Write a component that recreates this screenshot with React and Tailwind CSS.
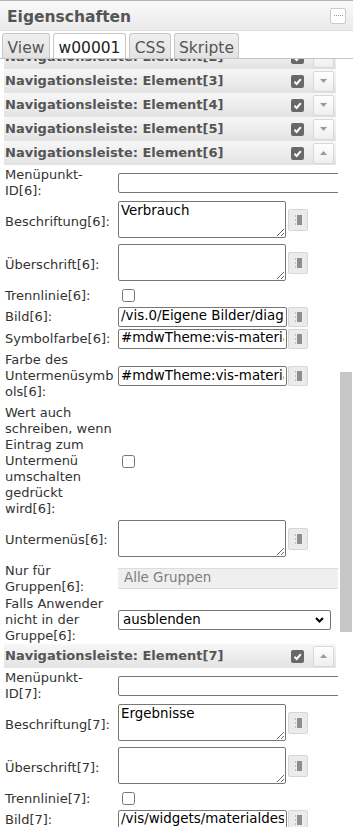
import React from "react";

const Btn = ({ h = "h-[20px]" }) => (
  <span
    className={`ml-[1px] flex w-[20px] ${h} shrink-0 items-center justify-center rounded-[2px] border border-[#d6d6d6] bg-[#ebebeb]`}
  >
    <svg width="8" height="10" viewBox="0 0 8 10">
      <rect x="1" y="0" width="1" height="2" fill="#bdbdbd" />
      <rect x="1" y="4" width="1" height="2" fill="#bdbdbd" />
      <rect x="1" y="8" width="1" height="2" fill="#bdbdbd" />
      <rect x="3" y="0" width="5" height="10" fill="#8e8e8e" />
    </svg>
  </span>
);

const TextInput = ({ value = "", wide }) => (
  <input
    readOnly
    value={value}
    className={`${wide ? "w-[250px]" : "w-[169px]"} h-[20px] shrink-0 rounded-[2px] border border-[#767676] bg-white px-[2px] text-[13.4px] text-black outline-none`}
  />
);

const Area = ({ value = "" }) => (
  <div className="flex items-center">
    <textarea
      readOnly
      value={value}
      className="block h-[37px] w-[168px] rounded-[2px] border border-[#767676] bg-white px-[2px] py-[1px] text-[13.4px] leading-[15px] text-black outline-none"
    />
    <span className="ml-[1px]">
      <Btn h="h-[22px]" />
    </span>
  </div>
);

const Check = () => (
  <input type="checkbox" readOnly className="ml-[4px] h-[13px] w-[13px]" />
);

const Field = ({ label, h, top, children }) => (
  <div className={`flex pl-[5px] ${h}`}>
    <div className="w-[111px] shrink-0 self-center break-words text-[13px] leading-4 text-[#333]">
      {label}
    </div>
    <div className={`ml-[2px] flex ${top ? "items-start pt-[1px]" : "items-center"}`}>
      {children}
    </div>
  </div>
);

const Header = ({ n, up }) => (
  <div className="ml-[4px] flex h-[24px] w-[332px] items-center bg-linear-to-b from-[#f7f7f7] to-[#e3e3e3] pr-[2px]">
    <span className="flex-1 pl-[1px] text-[13px] font-bold text-[#555]">
      Navigationsleiste: Element[{n}]
    </span>
    <span className="flex h-[13px] w-[13px] items-center justify-center rounded-[2px] bg-[#686868]">
      <svg width="11" height="11" viewBox="0 0 11 11">
        <path d="M2.5 5.8l2.2 2.2L8.8 3.2" fill="none" stroke="#fff" strokeWidth="2" />
      </svg>
    </span>
    <span className="ml-[9px] flex h-[21px] w-[21px] items-center justify-center rounded-[2px] border border-[#d8d8d8] bg-linear-to-b from-white to-[#efefef]">
      <svg width="7" height="4" viewBox="0 0 7 4">
        <polygon points={up ? "0,4 7,4 3.5,0" : "0,0 7,0 3.5,4"} fill="#9a9a9a" />
      </svg>
    </span>
  </div>
);

const Element6 = () => (
  <>
    <Field label="Menüpunkt-ID[6]:" h="h-[35px]">
      <TextInput wide />
    </Field>
    <Field label="Beschriftung[6]:" h="h-[43px]" top>
      <Area value="Verbrauch" />
    </Field>
    <Field label="Überschrift[6]:" h="h-[43px]" top>
      <Area />
    </Field>
    <Field label="Trennlinie[6]:" h="h-[19px]">
      <Check />
    </Field>
    <Field label="Bild[6]:" h="h-[23px]">
      <TextInput value="/vis.0/Eigene Bilder/diagramm.png" />
      <Btn />
    </Field>
    <Field label="Symbolfarbe[6]:" h="h-[21px]">
      <TextInput value="#mdwTheme:vis-materialdesign.0.colors.drawer.icon" />
      <Btn />
    </Field>
    <Field label="Farbe des Untermenüsymbols[6]:" h="h-[54px]">
      <TextInput value="#mdwTheme:vis-materialdesign.0.colors.drawer.subItem" />
      <Btn />
    </Field>
    <Field
      label="Wert auch schreiben, wenn Eintrag zum Untermenü umschalten gedrückt wird[6]:"
      h="h-[116px]"
    >
      <Check />
    </Field>
    <Field label="Untermenüs[6]:" h="h-[42px]" top>
      <Area />
    </Field>
    <Field label="Nur für Gruppen[6]:" h="h-[35px]">
      <div className="flex h-[21px] w-[250px] items-center border-y border-[#dcdcdc] bg-[#efefef] pl-[6px] text-[13.4px] text-[#7d7d7d]">
        Alle Gruppen
      </div>
    </Field>
    <Field label="Falls Anwender nicht in der Gruppe[6]:" h="h-[48px]">
      <div className="flex h-[20px] w-[213px] items-center justify-between rounded-[2px] border border-[#767676] bg-white pl-[4px] pr-[6px] text-[13.4px] text-black">
        ausblenden
        <svg width="9" height="6" viewBox="0 0 9 6">
          <path d="M1 1l3.5 3.5L8 1" fill="none" stroke="#000" strokeWidth="2" />
        </svg>
      </div>
    </Field>
  </>
);

const Element7 = () => (
  <>
    <Field label="Menüpunkt-ID[7]:" h="h-[35px]">
      <TextInput wide />
    </Field>
    <Field label="Beschriftung[7]:" h="h-[43px]" top>
      <Area value="Ergebnisse" />
    </Field>
    <Field label="Überschrift[7]:" h="h-[43px]" top>
      <Area />
    </Field>
    <Field label="Trennlinie[7]:" h="h-[19px]">
      <Check />
    </Field>
    <Field label="Bild[7]:" h="h-[23px]">
      <TextInput value="/vis/widgets/materialdesign/img/ergebnisse.png" />
      <Btn />
    </Field>
  </>
);

export default function App() {
  return (
    <div className="h-[827px] w-[353px] overflow-hidden bg-white font-['DejaVu_Sans',sans-serif]">
      {/* title bar */}
      <div className="flex h-[31px] items-center justify-between border-y border-t-[#b4b4b4] border-b-[#dedede] bg-linear-to-b from-[#f9f9f9] to-[#ebebeb] pl-[7px] pr-[7px]">
        <span className="pt-[5px] text-[15.5px] font-bold text-[#555]">Eigenschaften</span>
        <span className="flex h-[16px] w-[16px] items-center justify-center rounded-[2px] border border-[#cacaca] bg-white">
          <span className="w-[9px] border-t border-dotted border-[#999]" />
        </span>
      </div>

      {/* tabs */}
      <div className="mt-[2px] flex h-[26px] items-end gap-[3px] border-b border-[#c4c4c4] pl-[2px] text-[15.5px]">
        <span className="h-[25px] w-[48px] rounded-t-[3px] border border-b-0 border-[#c8c8c8] bg-linear-to-b from-[#efefef] to-[#e2e2e2] pt-[3px] text-center text-[#555]">
          View
        </span>
        <span className="h-[25px] w-[73px] rounded-t-[3px] border border-b-0 border-[#c8c8c8] bg-white pt-[3px] text-center text-[#222]">
          w00001
        </span>
        <span className="h-[25px] w-[42px] rounded-t-[3px] border border-b-0 border-[#c8c8c8] bg-linear-to-b from-[#efefef] to-[#e2e2e2] pt-[3px] text-center text-[#555]">
          CSS
        </span>
        <span className="h-[25px] w-[65px] rounded-t-[3px] border border-b-0 border-[#c8c8c8] bg-linear-to-b from-[#efefef] to-[#e2e2e2] pt-[3px] text-center text-[#555]">
          Skripte
        </span>
      </div>

      {/* scrolled content + scrollbar */}
      <div className="flex h-[768px]">
        <div className="w-[338px] shrink-0 overflow-hidden">
          <div className="-mt-[14px]">
            <Header n={2} />
            <Header n={3} />
            <Header n={4} />
            <Header n={5} />
            <Header n={6} up />
            <Element6 />
            <Header n={7} up />
            <Element7 />
          </div>
        </div>
        <div className="w-[15px]">
          <div className="ml-[2px] mt-[313px] h-[260px] w-[12px] bg-[#c6c6c6]" />
        </div>
      </div>
    </div>
  );
}
